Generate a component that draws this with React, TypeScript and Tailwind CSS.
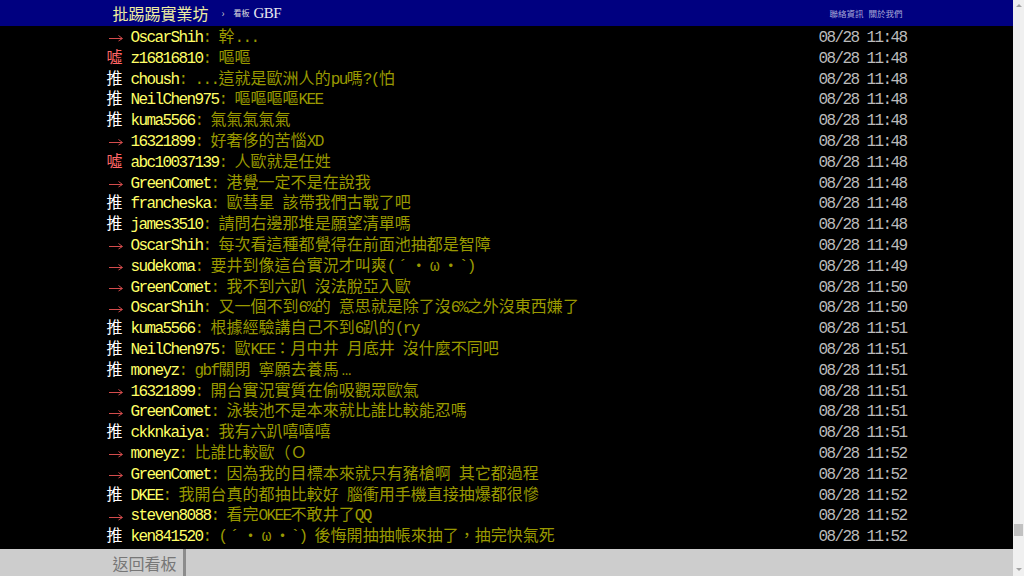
import React from "react";

type Push = { tag: "推" | "噓" | "→"; user: string; text: string; time: string };

const pushes: Push[] = [
  { tag: "→", user: "OscarShih", text: "幹...", time: "08/28 11:48" },
  { tag: "噓", user: "z16816810", text: "嘔嘔", time: "08/28 11:48" },
  { tag: "推", user: "choush", text: "...這就是歐洲人的pu嗎?(怕", time: "08/28 11:48" },
  { tag: "推", user: "NeilChen975", text: "嘔嘔嘔嘔KEE", time: "08/28 11:48" },
  { tag: "推", user: "kuma5566", text: "氣氣氣氣氣", time: "08/28 11:48" },
  { tag: "→", user: "16321899", text: "好奢侈的苦惱XD", time: "08/28 11:48" },
  { tag: "噓", user: "abc10037139", text: "人歐就是任姓", time: "08/28 11:48" },
  { tag: "→", user: "GreenComet", text: "港覺一定不是在說我", time: "08/28 11:48" },
  { tag: "推", user: "francheska", text: "歐彗星 該帶我們古戰了吧", time: "08/28 11:48" },
  { tag: "推", user: "james3510", text: "請問右邊那堆是願望清單嗎", time: "08/28 11:48" },
  { tag: "→", user: "OscarShih", text: "每次看這種都覺得在前面池抽都是智障", time: "08/28 11:49" },
  { tag: "→", user: "sudekoma", text: "要井到像這台實況才叫爽(´・ω・`)", time: "08/28 11:49" },
  { tag: "→", user: "GreenComet", text: "我不到六趴 沒法脫亞入歐", time: "08/28 11:50" },
  { tag: "→", user: "OscarShih", text: "又一個不到6%的 意思就是除了沒6%之外沒東西嫌了", time: "08/28 11:50" },
  { tag: "推", user: "kuma5566", text: "根據經驗講自己不到6趴的(ry", time: "08/28 11:51" },
  { tag: "推", user: "NeilChen975", text: "歐KEE：月中井 月底井 沒什麼不同吧", time: "08/28 11:51" },
  { tag: "推", user: "moneyz", text: "gbf關閉 寧願去養馬…", time: "08/28 11:51" },
  { tag: "→", user: "16321899", text: "開台實況實質在偷吸觀眾歐氣", time: "08/28 11:51" },
  { tag: "→", user: "GreenComet", text: "泳裝池不是本來就比誰比較能忍嗎", time: "08/28 11:51" },
  { tag: "推", user: "ckknkaiya", text: "我有六趴嘻嘻嘻", time: "08/28 11:51" },
  { tag: "→", user: "moneyz", text: "比誰比較歐（Ｏ", time: "08/28 11:52" },
  { tag: "→", user: "GreenComet", text: "因為我的目標本來就只有豬槍啊 其它都過程", time: "08/28 11:52" },
  { tag: "推", user: "DKEE", text: "我開台真的都抽比較好 腦衝用手機直接抽爆都很慘", time: "08/28 11:52" },
  { tag: "→", user: "steven8088", text: "看完OKEE不敢井了QQ", time: "08/28 11:52" },
  { tag: "推", user: "ken841520", text: "(´・ω・`) 後悔開抽抽帳來抽了，抽完快氣死", time: "08/28 11:52" },
];

const cjk = /[\u2E80-\u9FFF\uF900-\uFAFF\uFF00-\uFFEF\u3000-\u303F\u30FB]/;

// half-width runs get squeezed to an 8px cell, odd symbols get a full 16px cell
const Term = ({ s }: { s: string }) => {
  const out: React.ReactNode[] = [];
  let run = "";
  const flush = () => {
    if (run) out.push(<span key={out.length} className="tracking-[-1.6px]">{run}</span>);
    run = "";
  };
  for (const c of s) {
    if (c.charCodeAt(0) < 128) {
      run += c;
      continue;
    }
    flush();
    if (cjk.test(c)) out.push(<span key={out.length}>{c}</span>);
    else
      out.push(
        <span key={out.length} className="inline-block w-4 text-center">
          {c}
        </span>
      );
  }
  flush();
  return <>{out}</>;
};

const Tag = ({ tag }: { tag: Push["tag"] }) => {
  if (tag === "→")
    return (
      <span className="flex w-6 shrink-0 items-center">
        <svg width="16" height="8" viewBox="0 0 16 8" className="ml-[1px]">
          <path d="M1 4.5H14M10.5 1.5L14.5 4.5L10.5 7" fill="none" stroke="#d44c4c" strokeWidth="1" />
        </svg>
      </span>
    );
  return <span className={`w-6 shrink-0 ${tag === "推" ? "text-white" : "text-[#f66]"}`}>{tag}</span>;
};

const PushRow = ({ p }: { p: Push }) => (
  <div className="flex h-[20.8px] items-center whitespace-pre leading-[20.8px]">
    <Tag tag={p.tag} />
    <span className="text-[#ff6]">
      <Term s={p.user} />
    </span>
    <span className="text-[#990]">
      <Term s={": " + p.text} />
    </span>
    <span className="ml-auto text-[#bbb]">
      <Term s={p.time} />
    </span>
  </div>
);

const ScrollBar = () => (
  <div className="flex w-[11px] shrink-0 flex-col items-center bg-[#f0f0f0]">
    <div className="mt-[4px] h-0 w-0 border-x-[3px] border-b-[3px] border-x-transparent border-b-[#a3a3a3]" />
    <div className="flex-1" />
    <div className="h-[12px] w-[9px] bg-[#c1c1c1]" />
    <div className="h-[32px]" />
    <div className="mb-[5px] h-0 w-0 border-x-[3px] border-t-[3px] border-x-transparent border-t-[#a3a3a3]" />
  </div>
);

export default function App() {
  return (
    <div className="flex h-[576px] w-full overflow-hidden bg-black">
      <div className="flex min-w-0 flex-1 flex-col">
        <header className="h-[26px] shrink-0 bg-[#000080]">
          <div className="mx-auto flex h-full w-[800px] items-center font-['Noto_Sans_CJK_TC',sans-serif]">
            <span className="ml-[6px] text-[16px] leading-none text-[#eeeea0]">批踢踢實業坊</span>
            <span className="ml-[13px] text-[10px] leading-none text-[#ccc]">›</span>
            <span className="ml-[9px] text-[8px] leading-none text-[#ddd]">看板</span>
            <span className="ml-[4px] font-['Liberation_Serif',serif] text-[15px] leading-none tracking-[-0.6px] text-[#e8e8f0]">
              GBF
            </span>
            <nav className="ml-auto mr-[4px] flex gap-[5px] text-[8.5px] leading-none text-[#a8a8d8]">
              <span>聯絡資訊</span>
              <span>關於我們</span>
            </nav>
          </div>
        </header>

        <main className="min-h-0 flex-1 overflow-hidden pt-[2px]">
          <div className="mx-auto w-[800px] font-['Liberation_Mono','Noto_Sans_CJK_TC',monospace] text-[16px]">
            {pushes.map((p, i) => (
              <PushRow key={i} p={p} />
            ))}
          </div>
        </main>

        <footer className="h-[27px] shrink-0 bg-[#cdcdcd]">
          <div className="mx-auto flex h-full w-[800px]">
            <span className="flex items-center border-r-[3px] border-[#8c8c8c] px-[6px] font-['Noto_Sans_CJK_TC',sans-serif] text-[16px] text-[#777]">
              返回看板
            </span>
          </div>
        </footer>
      </div>
      <ScrollBar />
    </div>
  );
}
